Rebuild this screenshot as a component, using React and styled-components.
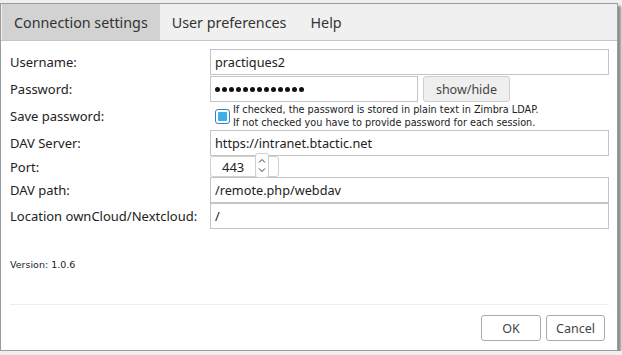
import React from "react";
import styled, { createGlobalStyle } from "styled-components";

const Global = createGlobalStyle`
  html, body {
    margin: 0;
    padding: 0;
    background: #efefef;
    font-family: "Noto Sans", "DejaVu Sans", sans-serif;
    color: #222;
  }
`;

const Dialog = styled.div`
  margin-top: 3px;
  width: 616px;
  height: 346px;
  border: 1px solid #9c9c9c;
  background: #fff;
  box-shadow: 3px 3px 2px rgba(0, 0, 0, 0.4);
  display: flex;
  flex-direction: column;
`;

const TabBar = styled.div`
  display: flex;
  height: 36px;
  background: #f0f0f0;
  border-bottom: 1px solid #c6c6c6;
  padding-left: 1px;
`;

const Tab = styled.div`
  display: flex;
  align-items: center;
  padding: 0 12px;
  font-size: 14.3px;
  color: #333;
  background: ${(p) => (p.active ? "#d2d2d2" : "transparent")};
`;

const Body = styled.div`
  flex: 1;
  display: flex;
  flex-direction: column;
  padding: 8px 8px 0 9px;
`;

const Row = styled.div`
  display: flex;
  align-items: center;
  min-height: ${(p) => p.h || 26}px;
  margin-bottom: ${(p) => p.mb ?? 1}px;
`;

const Label = styled.div`
  width: 200px;
  flex: none;
  font-size: 13px;
  color: #222;
`;

const Input = styled.div`
  box-sizing: border-box;
  width: ${(p) => p.w || 400}px;
  height: 26px;
  border: 1px solid #c4c4c4;
  display: flex;
  align-items: center;
  padding-left: 4px;
  font-size: 12.7px;
  color: #222;
`;

const Dots = styled.div`
  display: flex;
  gap: 2px;
`;

const Dot = styled.span`
  width: 5px;
  height: 5px;
  border-radius: 50%;
  background: #111;
`;

const Button = styled.div`
  box-sizing: border-box;
  width: ${(p) => p.w}px;
  height: 26px;
  margin-left: ${(p) => p.ml || 0}px;
  border: 1px solid ${(p) => p.bd || "#c8c8c8"};
  border-radius: 3px;
  background: ${(p) => p.bg || "#fff"};
  display: flex;
  align-items: center;
  justify-content: center;
  font-size: 12.5px;
  color: #444;
`;

const CheckWrap = styled.div`
  display: flex;
  align-items: center;
  gap: 3px;
  padding-left: 5px;
`;

const Check = styled.div`
  box-sizing: border-box;
  width: 15px;
  height: 15px;
  border: 1px solid #3a7fc0;
  border-radius: 3px;
  padding: 2px;
  background: #fff;
  &::after {
    content: "";
    display: block;
    width: 100%;
    height: 100%;
    background: #3daee9;
    border-radius: 1px;
  }
`;

const Note = styled.div`
  font-family: "DejaVu Sans", sans-serif;
  font-size: 9.7px;
  line-height: 13px;
  color: #222;
`;

const Spin = styled.div`
  box-sizing: border-box;
  width: 69px;
  height: 21px;
  border: 1px solid #cfcfcf;
  border-radius: 3px;
  display: flex;
  align-items: center;
  position: relative;
  font-size: 13px;
  padding-left: 11px;
`;

const Arrows = styled.div`
  position: absolute;
  left: 44px;
  top: -4px;
  box-sizing: border-box;
  width: 14px;
  height: 25px;
  border: 1px solid #cfcfcf;
  border-radius: 3px;
  background: #fff;
  display: flex;
  flex-direction: column;
  align-items: center;
  justify-content: space-around;
  padding: 2px 0;
`;

const Version = styled.div`
  font-family: "DejaVu Sans", sans-serif;
  font-size: 9.5px;
  margin-top: 30px;
  color: #222;
`;

const Footer = styled.div`
  margin-top: auto;
  border-top: 1px solid #ececec;
  display: flex;
  justify-content: flex-end;
  gap: 5px;
  padding: 10px 4px 9px 0;
`;

const Chevron = ({ up }) => (
  <svg width="8" height="6" viewBox="0 0 8 6">
    <path
      d={up ? "M1 4.5 L4 1.5 L7 4.5" : "M1 1.5 L4 4.5 L7 1.5"}
      fill="none"
      stroke="#333"
      strokeWidth="1"
    />
  </svg>
);

export default function App() {
  return (
    <>
      <Global />
      <Dialog>
        <TabBar>
          <Tab active>Connection settings</Tab>
          <Tab>User preferences</Tab>
          <Tab>Help</Tab>
        </TabBar>
        <Body>
          <Row>
            <Label>Username:</Label>
            <Input>practiques2</Input>
          </Row>
          <Row>
            <Label>Password:</Label>
            <Input w={208}>
              <Dots>
                {Array.from({ length: 13 }).map((_, i) => (
                  <Dot key={i} />
                ))}
              </Dots>
            </Input>
            <Button w={87} ml={5} bg="#efefef" bd="#cfcfcf">
              show/hide
            </Button>
          </Row>
          <Row h={26} mb={1}>
            <Label>Save password:</Label>
            <CheckWrap>
              <Check />
              <Note>
                If checked, the password is stored in plain text in Zimbra LDAP.
                <br />
                If not checked you have to provide password for each session.
              </Note>
            </CheckWrap>
          </Row>
          <Row mb={0}>
            <Label>DAV Server:</Label>
            <Input>https://intranet.btactic.net</Input>
          </Row>
          <Row h={20} mb={0}>
            <Label>Port:</Label>
            <Spin>
              443
              <Arrows>
                <Chevron up />
                <Chevron />
              </Arrows>
            </Spin>
          </Row>
          <Row mb={0}>
            <Label>DAV path:</Label>
            <Input>/remote.php/webdav</Input>
          </Row>
          <Row mb={0}>
            <Label>Location ownCloud/Nextcloud:</Label>
            <Input>/</Input>
          </Row>
          <Version>Version: 1.0.6</Version>
          <Footer>
            <Button w={60} bd="#aaa">OK</Button>
            <Button w={59} bd="#aaa">Cancel</Button>
          </Footer>
        </Body>
      </Dialog>
    </>
  );
}
